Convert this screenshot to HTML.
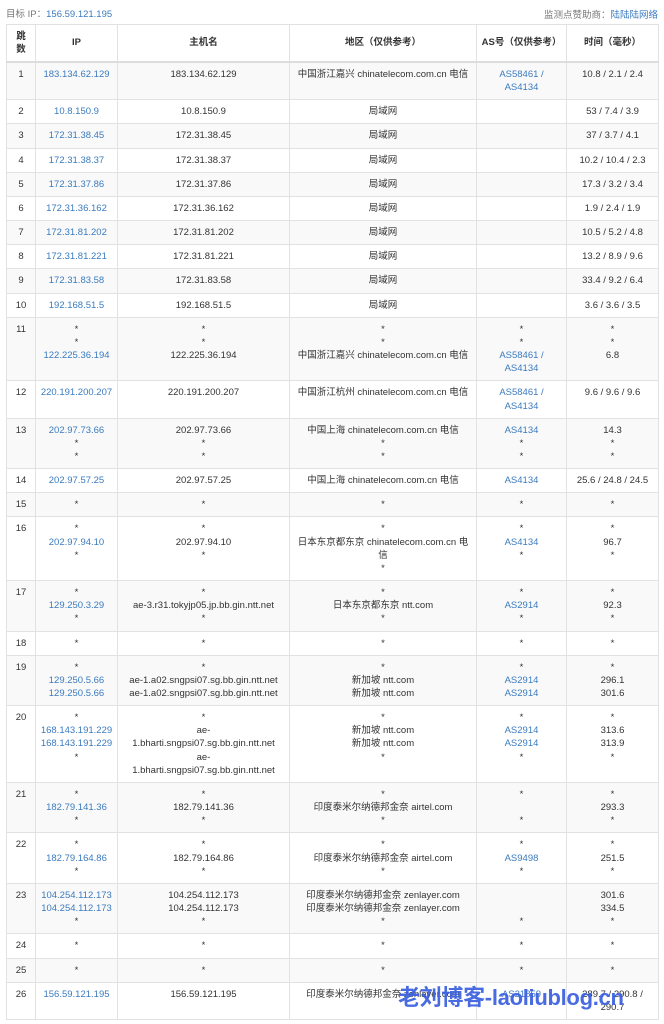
<!DOCTYPE html>
<html><head><meta charset="utf-8"><style>
body{margin:0;background:#fff;font-family:"Liberation Sans","Noto Sans CJK SC",sans-serif;font-size:9.5px;color:#333;width:664px;height:1024px;overflow:hidden;position:relative}
.top{position:absolute;top:6px;left:6px;right:6px;height:14px;color:#777;font-size:9.5px}
.top a{color:#3b7bbf}
.top .r{position:absolute;right:0;top:1px}
table{position:absolute;top:24px;left:6px;width:652px;border-collapse:collapse;table-layout:fixed}
td,th{border:1px solid #e2e2e2;text-align:center;vertical-align:top;padding:5px 2px 5px;line-height:13.15px}
th{font-weight:bold;vertical-align:middle;padding:3px 2px;height:30px;border-bottom:2px solid #ddd}
tr:nth-child(even) td{background:#f9f9f9}
.l{color:#3b7bbf}
.wm{position:absolute;left:398px;top:980px;font-size:22px;font-weight:bold;color:#3a5fe0;letter-spacing:-0.3px;font-family:"Liberation Sans","Noto Sans CJK SC",sans-serif;opacity:.92}
</style></head><body>
<div class="top">目标 IP：<a>156.59.121.195</a><span class="r">监测点赞助商：<a>陆陆陆网络</a></span></div>
<table>
<colgroup><col style="width:29px"><col style="width:82px"><col style="width:172px"><col style="width:187px"><col style="width:90px"><col style="width:92px"></colgroup>
<tr><th>跳<br>数</th><th>IP</th><th>主机名</th><th>地区（仅供参考）</th><th>AS号（仅供参考）</th><th>时间（毫秒）</th></tr>
<tr><td>1</td><td class="l">183.134.62.129</td><td>183.134.62.129</td><td>中国浙江嘉兴 chinatelecom.com.cn 电信</td><td class="l">AS58461 /<br>AS4134</td><td>10.8 / 2.1 / 2.4</td></tr>
<tr><td>2</td><td class="l">10.8.150.9</td><td>10.8.150.9</td><td>局域网</td><td></td><td>53 / 7.4 / 3.9</td></tr>
<tr><td>3</td><td class="l">172.31.38.45</td><td>172.31.38.45</td><td>局域网</td><td></td><td>37 / 3.7 / 4.1</td></tr>
<tr><td>4</td><td class="l">172.31.38.37</td><td>172.31.38.37</td><td>局域网</td><td></td><td>10.2 / 10.4 / 2.3</td></tr>
<tr><td>5</td><td class="l">172.31.37.86</td><td>172.31.37.86</td><td>局域网</td><td></td><td>17.3 / 3.2 / 3.4</td></tr>
<tr><td>6</td><td class="l">172.31.36.162</td><td>172.31.36.162</td><td>局域网</td><td></td><td>1.9 / 2.4 / 1.9</td></tr>
<tr><td>7</td><td class="l">172.31.81.202</td><td>172.31.81.202</td><td>局域网</td><td></td><td>10.5 / 5.2 / 4.8</td></tr>
<tr><td>8</td><td class="l">172.31.81.221</td><td>172.31.81.221</td><td>局域网</td><td></td><td>13.2 / 8.9 / 9.6</td></tr>
<tr><td>9</td><td class="l">172.31.83.58</td><td>172.31.83.58</td><td>局域网</td><td></td><td>33.4 / 9.2 / 6.4</td></tr>
<tr><td>10</td><td class="l">192.168.51.5</td><td>192.168.51.5</td><td>局域网</td><td></td><td>3.6 / 3.6 / 3.5</td></tr>
<tr><td>11</td><td>*<br>*<br><span class="l">122.225.36.194</span></td><td>*<br>*<br>122.225.36.194</td><td>*<br>*<br>中国浙江嘉兴 chinatelecom.com.cn 电信</td><td>*<br>*<br><span class="l">AS58461 /<br>AS4134</span></td><td>*<br>*<br>6.8</td></tr>
<tr><td>12</td><td class="l">220.191.200.207</td><td>220.191.200.207</td><td>中国浙江杭州 chinatelecom.com.cn 电信</td><td class="l">AS58461 /<br>AS4134</td><td>9.6 / 9.6 / 9.6</td></tr>
<tr><td>13</td><td><span class="l">202.97.73.66</span><br>*<br>*</td><td>202.97.73.66<br>*<br>*</td><td>中国上海 chinatelecom.com.cn 电信<br>*<br>*</td><td><span class="l">AS4134</span><br>*<br>*</td><td>14.3<br>*<br>*</td></tr>
<tr><td>14</td><td class="l">202.97.57.25</td><td>202.97.57.25</td><td>中国上海 chinatelecom.com.cn 电信</td><td class="l">AS4134</td><td>25.6 / 24.8 / 24.5</td></tr>
<tr><td>15</td><td>*</td><td>*</td><td>*</td><td>*</td><td>*</td></tr>
<tr><td>16</td><td>*<br><span class="l">202.97.94.10</span><br>*</td><td>*<br>202.97.94.10<br>*</td><td>*<br>日本东京都东京 chinatelecom.com.cn 电<br>信<br>*</td><td>*<br><span class="l">AS4134</span><br>*</td><td>*<br>96.7<br>*</td></tr>
<tr><td>17</td><td>*<br><span class="l">129.250.3.29</span><br>*</td><td>*<br>ae-3.r31.tokyjp05.jp.bb.gin.ntt.net<br>*</td><td>*<br>日本东京都东京 ntt.com<br>*</td><td>*<br><span class="l">AS2914</span><br>*</td><td>*<br>92.3<br>*</td></tr>
<tr><td>18</td><td>*</td><td>*</td><td>*</td><td>*</td><td>*</td></tr>
<tr><td>19</td><td>*<br><span class="l">129.250.5.66<br>129.250.5.66</span></td><td>*<br>ae-1.a02.sngpsi07.sg.bb.gin.ntt.net<br>ae-1.a02.sngpsi07.sg.bb.gin.ntt.net</td><td>*<br>新加坡 ntt.com<br>新加坡 ntt.com</td><td>*<br><span class="l">AS2914<br>AS2914</span></td><td>*<br>296.1<br>301.6</td></tr>
<tr><td>20</td><td>*<br><span class="l">168.143.191.229<br>168.143.191.229</span><br>*</td><td>*<br>ae-<br>1.bharti.sngpsi07.sg.bb.gin.ntt.net<br>ae-<br>1.bharti.sngpsi07.sg.bb.gin.ntt.net</td><td>*<br>新加坡 ntt.com<br>新加坡 ntt.com<br>*</td><td>*<br><span class="l">AS2914<br>AS2914</span><br>*</td><td>*<br>313.6<br>313.9<br>*</td></tr>
<tr><td>21</td><td>*<br><span class="l">182.79.141.36</span><br>*</td><td>*<br>182.79.141.36<br>*</td><td>*<br>印度泰米尔纳德邦金奈 airtel.com<br>*</td><td>*<br>&nbsp;<br>*</td><td>*<br>293.3<br>*</td></tr>
<tr><td>22</td><td>*<br><span class="l">182.79.164.86</span><br>*</td><td>*<br>182.79.164.86<br>*</td><td>*<br>印度泰米尔纳德邦金奈 airtel.com<br>*</td><td>*<br><span class="l">AS9498</span><br>*</td><td>*<br>251.5<br>*</td></tr>
<tr><td>23</td><td><span class="l">104.254.112.173<br>104.254.112.173</span><br>*</td><td>104.254.112.173<br>104.254.112.173<br>*</td><td>印度泰米尔纳德邦金奈 zenlayer.com<br>印度泰米尔纳德邦金奈 zenlayer.com<br>*</td><td>&nbsp;<br>&nbsp;<br>*</td><td>301.6<br>334.5<br>*</td></tr>
<tr><td>24</td><td>*</td><td>*</td><td>*</td><td>*</td><td>*</td></tr>
<tr><td>25</td><td>*</td><td>*</td><td>*</td><td>*</td><td>*</td></tr>
<tr><td>26</td><td class="l">156.59.121.195</td><td>156.59.121.195</td><td>印度泰米尔纳德邦金奈 zenlayer.com</td><td class="l">AS21859</td><td>289.7 / 290.8 /<br>290.7</td></tr>
</table>
<div class="wm">老刘博客-laoliublog.cn</div>
</body></html>
